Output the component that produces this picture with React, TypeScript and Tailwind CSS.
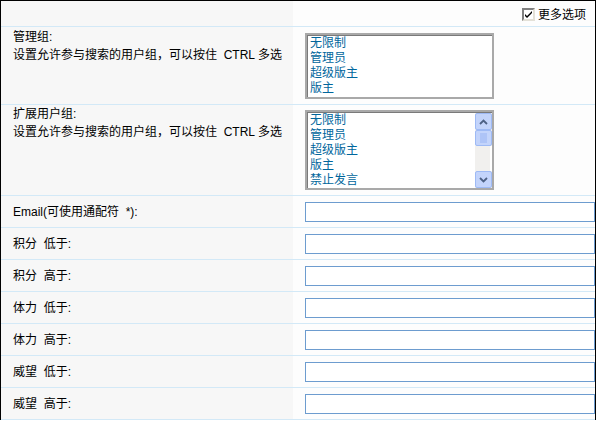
import React from 'react';

const adminGroups = ['无限制', '管理员', '超级版主', '版主'];

// only the rows that fit in the list's visible area
const extGroups = ['无限制', '管理员', '超级版主', '版主', '禁止发言'];

const rangeFields = [
  'Email(可使用通配符\u00a0 *):',
  '积分\u00a0 低于:',
  '积分\u00a0 高于:',
  '体力\u00a0 低于:',
  '体力\u00a0 高于:',
  '威望\u00a0 低于:',
  '威望\u00a0 高于:',
];

function Checkbox() {
  return (
    <span className="inline-flex w-[13px] h-[13px] items-center justify-center bg-white border-2 border-t-[#808080] border-l-[#808080] border-b-[#e4e1d8] border-r-[#e4e1d8]">
      <svg width="9" height="9" viewBox="0 0 9 9">
        <path d="M1 4l2 2 5-5v2l-5 5-2-2z" fill="#000" />
      </svg>
    </span>
  );
}

function ScrollButton({ dir }: { dir: 'up' | 'down' }) {
  return (
    <div className="h-[17px] flex items-center justify-center bg-[#c3d4fb] border border-[#9ebaf5] rounded-[2px]">
      <svg width="9" height="6" viewBox="0 0 9 6">
        {dir === 'up' ? (
          <path d="M1 5l3.5-3.5L8 5" fill="none" stroke="#4d6185" strokeWidth="1.8" />
        ) : (
          <path d="M1 1l3.5 3.5L8 1" fill="none" stroke="#4d6185" strokeWidth="1.8" />
        )}
      </svg>
    </div>
  );
}

function ListBox({
  items,
  height,
  scroll,
}: {
  items: string[];
  height: string;
  scroll?: boolean;
}) {
  return (
    <div className={`w-[189px] ${height} border-2 border-[#a9a9a9]`}>
      <div className="flex h-full bg-white border-t border-l border-[#7a7a7a] border-b-[#ececec] border-r-[#ececec]">
        <div className="flex-1 pl-[2px] text-[#00669c] leading-[15px]">
          {items.map((g) => (
            <div key={g} className="whitespace-nowrap">
              {g}
            </div>
          ))}
        </div>
        {scroll && (
          <div className="w-[17px] flex flex-col bg-[#f1f0ee]">
            <ScrollButton dir="up" />
            <div className="h-[16px] bg-[#c3d4fb] border border-[#9ebaf5] rounded-[2px] flex justify-center">
              <div className="w-[7px] my-[2px] bg-[#aec4f7]" />
            </div>
            <div className="flex-1 border-r-2 border-white" />
            <ScrollButton dir="down" />
          </div>
        )}
      </div>
    </div>
  );
}

export default function App() {
  return (
    <div className="w-[596px] h-[422px] bg-white font-['Liberation_Sans','Noto_Sans_CJK_SC',sans-serif] text-[12px] text-black">
      <div className="border-x border-t border-black">
        {/* header row with the extra-options toggle */}
        <div className="grid grid-cols-[292px_1fr] h-[26px] border-b border-[#d3e9f7]">
          <div className="bg-[#f7f7f7]" />
          <div className="bg-[#fdfdfd] flex items-center justify-end gap-[3px] pr-[9px] pt-[2px]">
            <Checkbox />
            <span>更多选项</span>
          </div>
        </div>

        <div className="grid grid-cols-[292px_1fr] h-[78px] border-b border-[#d3e9f7]">
          <div className="bg-[#f7f7f7] pl-[12px] pt-[1px] leading-[18px]">
            <div>管理组:</div>
            <div>设置允许参与搜索的用户组，可以按住 &nbsp;CTRL 多选</div>
          </div>
          <div className="bg-[#fdfdfd] pl-[12px] pt-[6px]">
            <ListBox items={adminGroups} height="h-[66px]" />
          </div>
        </div>

        <div className="grid grid-cols-[292px_1fr] h-[91px] border-b border-[#d3e9f7]">
          <div className="bg-[#f7f7f7] pl-[12px] leading-[18px]">
            <div>扩展用户组:</div>
            <div>设置允许参与搜索的用户组，可以按住 &nbsp;CTRL 多选</div>
          </div>
          <div className="bg-[#fdfdfd] pl-[12px] pt-[5px]">
            <ListBox items={extGroups} height="h-[80px]" scroll />
          </div>
        </div>

        {rangeFields.map((label) => (
          <div
            key={label}
            className="grid grid-cols-[292px_1fr] h-[32px] border-b border-[#d3e9f7]"
          >
            <div className="bg-[#f7f7f7] pl-[12px] flex items-center">{label}</div>
            <div className="bg-[#fdfdfd] pl-[12px] flex items-center pt-[1px]">
              <input
                type="text"
                className="w-full h-[20px] bg-white border border-[#6d9ccf] outline-none"
              />
            </div>
          </div>
        ))}
      </div>
    </div>
  );
}
